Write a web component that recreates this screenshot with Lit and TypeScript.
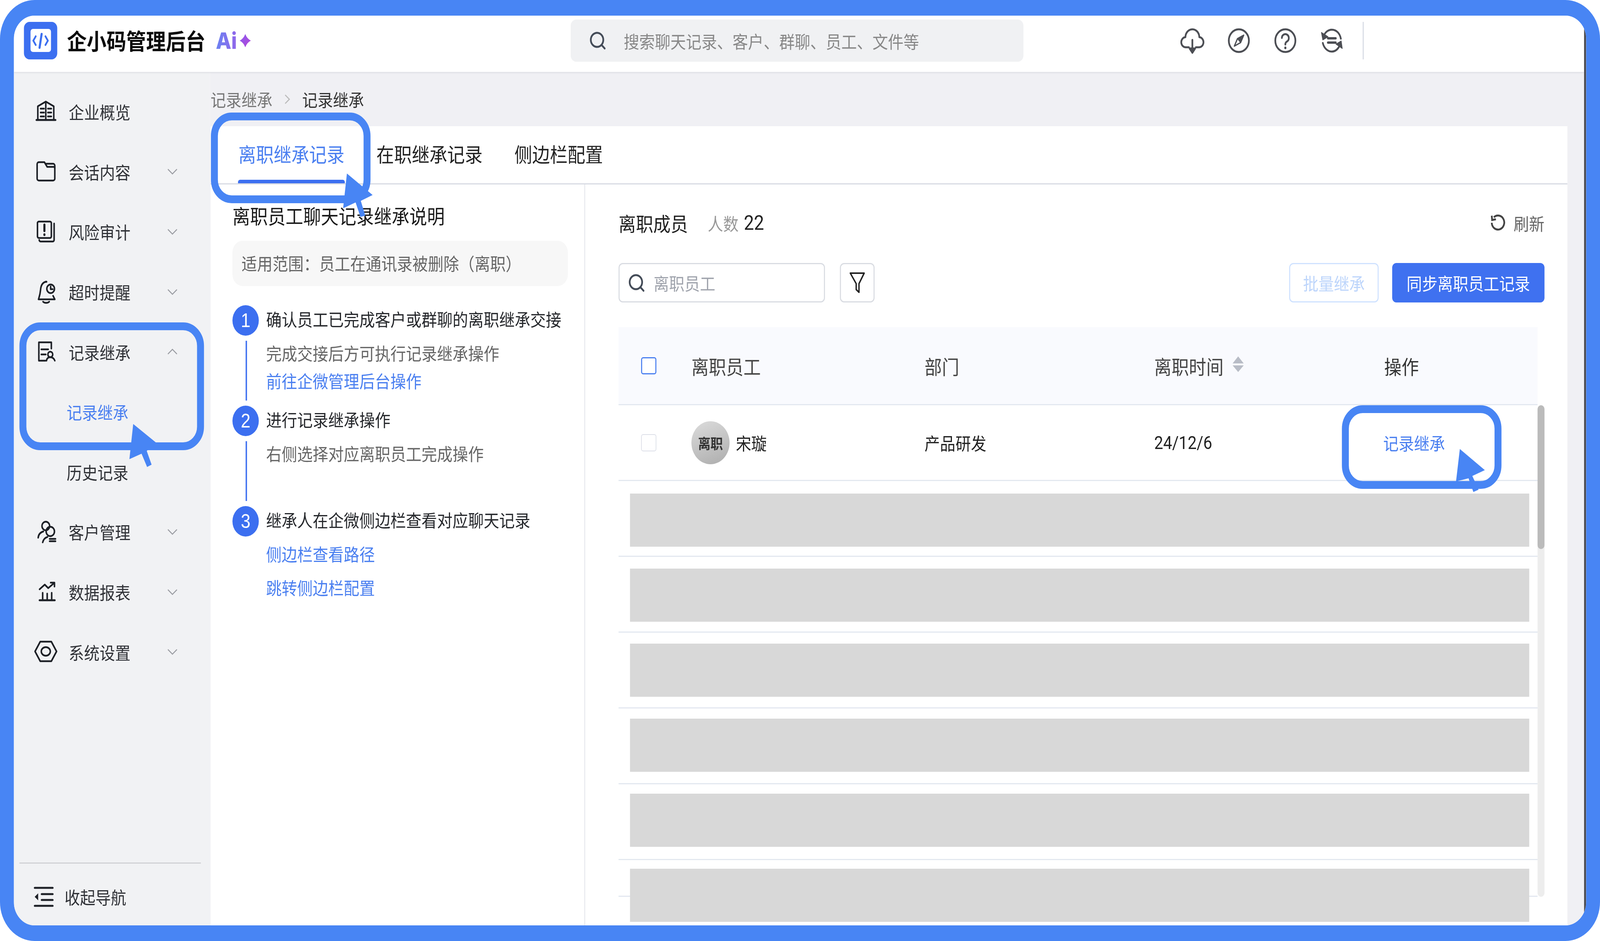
import { LitElement, html, css, svg } from "lit";
import { customElement } from "lit/decorators.js";

const chevDown = html`<svg class="chev" viewBox="0 0 28 16"><path d="M1 2 L14 14 L27 2" /></svg>`;
const chevUp = html`<svg class="chev" viewBox="0 0 28 16"><path d="M1 14 L14 2 L27 14" /></svg>`;

const ICONS: Record<string, unknown> = {
  building: svg`<path d="M1 49h55" stroke-width="5"/><path d="M5 49V14L28 2l23 12v35M28 2v47"/><path d="M13 20h10M13 30h10M13 40h10M34 20h10M34 30h10M34 40h10"/>`,
  folder: svg`<path d="M3 9a5 5 0 0 1 5-5h16l8 12h19a3 3 0 0 1 3 3v27a5 5 0 0 1-5 5H8a5 5 0 0 1-5-5z"/><path d="M27 8h22a5 5 0 0 1 5 5v6"/>`,
  risk: svg`<rect x="4" y="2" width="40" height="42" rx="4"/><path d="M52 7v42a4 4 0 0 1-4 4H13a4 4 0 0 1-4-4"/><path d="M24 10v16" stroke-width="6"/><path d="M24 35v1" stroke-width="6"/>`,
  bell: svg`<path d="M28 2C18 4 14 12 13 22c-1 10-3 17-6 25h47l-5-9"/><path d="M20 53c4 4 14 4 18 0"/><circle cx="42" cy="20" r="11"/><path d="M42 14v7h6"/><path d="M28 2h2" stroke-width="5"/>`,
  record: svg`<path d="M44 20V4H8v47h19"/><path d="M15 22h20M15 35h13"/><circle cx="41" cy="35" r="7"/><path d="M30 51c1-7 6-9 11-9s10 2 13 9"/>`,
  customer: svg`<circle cx="28" cy="13" r="11"/><circle cx="41" cy="27" r="12"/><path d="M6 43c1-9 7-14 15-16"/><path d="M19 55c2-7 6-12 14-14"/><path d="M39 46h17M39 52h17"/>`,
  report: svg`<path d="M10 49h44" stroke-width="5"/><path d="M19 49V30M32 49V32M45 49V30"/><path d="M10 21 25 9l10 9L52 5"/><path d="M42 4h11v10"/>`,
  setting: svg`<path d="M-3 27 12 2h32l15 25-15 25H12z"/><ellipse cx="28" cy="27" rx="13" ry="11"/>`,
};

const NAV: [string, string, string][] = [
  ["building", "企业概览", ""],
  ["folder", "会话内容", "down"],
  ["risk", "风险审计", "down"],
  ["bell", "超时提醒", "down"],
  ["record", "记录继承", "up"],
];
const NAV2: [string, string, string][] = [
  ["customer", "客户管理", "down"],
  ["report", "数据报表", "down"],
  ["setting", "系统设置", "down"],
];

const FONT = css`"Noto Sans CJK SC", "Noto Sans", sans-serif`;

// The layout is authored at the reference's 4612px width. The sandbox browser
// actually reports innerWidth = 4096 (not the stated 4612), which would crop
// the right side, so the stage is squeezed horizontally to the real window
// width in render(). This narrows glyphs by ~11% at 4096; at a true 4612 window
// the factor is 1 and nothing is distorted.
const DESIGN_WIDTH = 4612;

@customElement("app-root")
export class AppRoot extends LitElement {
  static styles = css`
    :host { display: block; width: 100%; height: 2408px; overflow: hidden; background: #fff; font-family: ${FONT}; font-size: 44.5px; color: #222; }
    * { box-sizing: border-box; }
    svg { display: block; flex: none; overflow: visible; }
    .stage { width: 4612px; height: 2408px; position: relative; transform-origin: 0 0; }
    .frame { width: 4612px; height: 2408px; border: 40px solid #4885f4; border-radius: 100px; overflow: hidden; background: #fff; }
    .inner { width: 100%; height: 100%; display: flex; flex-direction: column; border-right: 6px solid #4a4a50; }

    .header { height: 144px; flex: none; position: relative; z-index: 2; background: #fff; display: flex; align-items: center; padding: 0 0 16px 29px; box-shadow: 0 2px 5px rgba(20, 30, 60, .10); }
    .brand { width: 1576px; flex: none; display: flex; align-items: center; }
    .logo { width: 96px; height: 96px; }
    .brand-title { margin: 0 0 3px 28px; font-size: 57px; font-weight: 700; color: #0c0c0c; line-height: 1; }
    .ai { margin-left: 30px; font-family: Inter, sans-serif; font-weight: 800; font-size: 58px; line-height: 1; background: linear-gradient(90deg, #6b82f2, #9266ea); -webkit-background-clip: text; background-clip: text; color: transparent; }
    .star { margin-left: 8px; width: 32px; height: 34px; }
    .gsearch { width: 1305px; height: 108px; flex: none; background: #f0f1f3; border-radius: 16px; display: flex; align-items: center; padding-left: 55px; font-size: 44.8px; color: #888; }
    .gsearch svg { width: 46px; height: 46px; margin-right: 52px; }
    .hicons { margin-left: 455px; display: flex; align-items: center; gap: 70px; }
    .hicons svg { width: 64px; height: 64px; fill: none; stroke: #4c4e54; stroke-width: 5; stroke-linecap: round; stroke-linejoin: round; }
    .hdiv { margin-left: 57px; width: 3px; height: 96px; background: #d5dae3; }

    .body { flex: 1; min-height: 0; display: flex; }
    .side { width: 565px; flex: none; background: #f1f2f4; display: flex; flex-direction: column; padding-top: 25px; }
    .nav { height: 153.6px; flex: none; display: flex; align-items: center; padding: 0 94px 0 64px; color: #2f3136; }
    .nav .ic { width: 56px; height: 56px; margin-right: 38px; fill: none; stroke: #1d2026; stroke-width: 4.4; stroke-linejoin: round; stroke-linecap: round; }
    .chev { width: 28px; height: 16px; margin-left: auto; fill: none; stroke: #9a9ca2; stroke-width: 2.6; }
    .sub { padding-left: 152px; }
    .sub.on { color: #4a7ff0; }
    .foot { margin: auto 26px 0 16px; height: 161px; flex: none; border-top: 3px solid #d1d2d5; display: flex; align-items: center; padding: 10px 0 0 42px; color: #2f3136; }
    .foot svg { width: 56px; height: 56px; margin-right: 32px; fill: none; stroke: #1d2026; stroke-width: 5; stroke-linecap: round; }

    .main { flex: 1; min-width: 0; background: #f0f0f4; display: flex; flex-direction: column; padding: 0 48px 0 2px; }
    .crumbs { height: 139px; flex: none; display: flex; align-items: center; color: #777; }
    .crumbs svg { width: 20px; height: 28px; margin: 0 33px; fill: none; stroke: #bbb; stroke-width: 3; }
    .crumbs .cur { color: #333; }
    .card { flex: 1; min-height: 0; background: #fff; display: flex; flex-direction: column; }
    .tabs { height: 149px; flex: none; display: flex; gap: 92px; padding-left: 80px; border-bottom: 3px solid #d8dbe3; font-size: 51px; color: #222; }
    .tab { position: relative; display: flex; align-items: center; padding-bottom: 7px; }
    .tab.on { color: #4a7ff0; }
    .tab.on::after { content: ""; position: absolute; left: -1px; right: -1px; bottom: 0; height: 9px; background: #3c6ff0; border-radius: 6px 6px 0 0; }
    .split { flex: 1; min-height: 0; display: flex; }

    .guide { width: 1080px; flex: none; border-right: 3px solid #e8eaee; padding: 46px 0 0 63px; }
    .guide-title { font-size: 51px; line-height: 70px; margin-top: -2px; height: 70px; white-space: nowrap; color: #1a1a1a; }
    .scope { width: 967px; height: 116px; margin-top: 30px; background: #f7f7f7; border-radius: 30px; padding-left: 26px; display: flex; align-items: center; color: #666; font-size: 44.8px; padding-bottom: 4px; }
    .steps { margin-top: 49px; }
    .step { height: 257px; display: grid; grid-template-columns: 76px 1fr; column-gap: 21px; font-size: 44.8px; }
    .rail { display: flex; flex-direction: column; align-items: center; }
    .num { width: 76px; height: 78px; flex: none; border-radius: 50%; background: #3c6ff0; color: #fff; display: flex; align-items: center; justify-content: center; font: 50px "Liberation Sans", sans-serif; }
    .rail i { display: block; width: 4px; height: 153px; margin: 13px 0 0 4px; background: #3c6ff0; }
    .st { height: 69px; line-height: 69px; color: #26282c; white-space: nowrap; }
    .sd { height: 70px; line-height: 70px; margin-top: 18px; color: #666; white-space: nowrap; }
    .lk { height: 70px; line-height: 70px; color: #4a7ff0; white-space: nowrap; }
    .lk.a { margin-top: 1px; }
    .lk.b { margin-top: 18px; }
    .lk.c { margin-top: 16px; }

    .panel { flex: 1; min-width: 0; padding: 49px 66px 0 96px; }
    .ptitle { height: 98px; display: flex; align-items: center; }
    .ptitle b { font-weight: 400; font-size: 50px; color: #1f1f1f; }
    .ptitle .cnt { margin-left: 57px; color: #999; }
    .ptitle .val { margin-left: 15px; font: 52px Roboto, sans-serif; color: #222; }
    .refresh { margin-left: auto; display: flex; align-items: center; color: #666; }
    .refresh svg { width: 42px; height: 42px; margin-right: 24px; fill: none; stroke: #444; stroke-width: 5; }
    .tools { height: 101px; margin-top: 54px; display: flex; }
    .input { width: 595px; border: 3px solid #d9dce2; border-radius: 12px; display: flex; align-items: center; padding-left: 26px; color: #a0a4ad; }
    .input svg { width: 46px; height: 46px; margin-right: 26px; }
    .filter { width: 100px; margin-left: 43px; border: 3px solid #d9dce2; border-radius: 12px; display: flex; align-items: center; justify-content: center; }
    .filter svg { width: 44px; height: 56px; fill: none; stroke: #222; stroke-width: 4; stroke-linejoin: round; }
    .btn { display: flex; align-items: center; justify-content: center; border-radius: 12px; }
    .btn.off { width: 258px; margin-left: auto; border: 3px solid #cfe2ff; color: #bdd5fb; }
    .btn.pri { width: 439px; margin-left: 39px; background: #3f71f0; color: #fff; }

    .tbl { margin-top: 63px; display: grid; grid-template-columns: 2649px 20px; }
    .thead, .row { display: grid; grid-template-columns: 145px 672px 662px 663px 1fr; padding-left: 65px; align-items: center; }
    .thead { height: 200px; background: #f9fafe; border-bottom: 3px solid #e3e8f0; font-size: 50px; color: #444; grid-column: 1; }
    .thead .dark { color: #333; }
    .sortcol { display: flex; align-items: center; gap: 26px; }
    .sortcol svg { width: 32px; height: 40px; fill: #b8bcc6; margin-top: -8px; }
    .cb { width: 44px; height: 44px; border-radius: 6px; border: 2px solid #dcdfe8; background: #fff; }
    .cb.b { border: 3px solid #4a7ff0; }
    .tbody { grid-column: 1; position: relative; }
    .row { height: 194px; border-bottom: 3px solid #e3e8f0; color: #222; }
    .row.last { height: 94px; }
    .who { display: flex; align-items: center; gap: 18px; }
    .avatar { width: 110px; height: 110px; border-radius: 50%; background: linear-gradient(160deg, #dcdcdc, #adadad); display: flex; align-items: center; justify-content: center; font-size: 36px; font-weight: 700; color: #333; white-space: nowrap; }
    .date { font: 46px Roboto, sans-serif; color: #222; }
    .op { color: #4a7ff0; margin-left: -3px; }
    .masks { position: absolute; left: 33px; top: 226px; width: 2592px; display: flex; flex-direction: column; gap: 56px; }
    .masks div { height: 136px; background: #d8d8d8; }
    .track { grid-column: 2; background: #ededed; border-radius: 10px; position: relative; }
    .thumb { height: 368px; background: #bbb; border-radius: 10px; }

    .notes { position: absolute; left: 0; top: 0; width: 4612px; height: 2408px; z-index: 5; pointer-events: none; }
    .notes rect { fill: none; stroke: #4885f4; stroke-width: 20; }
    .notes polygon { fill: #4885f4; stroke: none; }
  `;

  private searchIcon(color: string) {
    return html`<svg viewBox="0 0 46 46" fill="none" stroke=${color} stroke-width="5" stroke-linecap="round"><circle cx="21" cy="21" r="18"/><path d="M34 34l9 9"/></svg>`;
  }

  private navRow(r: [string, string, string]) {
    return html`<div class="nav">
      <svg class="ic" viewBox="0 0 56 56">${ICONS[r[0]]}</svg>
      <span>${r[1]}</span>
      ${r[2] === "down" ? chevDown : r[2] === "up" ? chevUp : ""}
    </div>`;
  }

  private header() {
    return html`<div class="header">
      <div class="brand">
        <svg class="logo" viewBox="0 0 96 96">
          <rect width="96" height="96" rx="16" fill="#3c6ff0"/>
          <rect x="19" y="18" width="59" height="59" rx="7" fill="#fff"/>
          <path d="M34 37 27 48l7 11M62 37l7 11-7 11" fill="none" stroke="#3c6ff0" stroke-width="5" stroke-linecap="round" stroke-linejoin="round"/>
          <path d="M51 31 45 66" fill="none" stroke="#3c6ff0" stroke-width="6" stroke-linecap="round"/>
        </svg>
        <span class="brand-title">企小码管理后台</span>
        <span class="ai">Ai</span>
        <svg class="star" viewBox="0 0 32 34">
          <defs><linearGradient id="sg" x1="0" y1="0" x2="1" y2="1"><stop offset="0" stop-color="#8a5cf0"/><stop offset="1" stop-color="#b545d6"/></linearGradient></defs>
          <path d="M16 0Q21 12 32 17Q21 22 16 34Q11 22 0 17Q11 12 16 0z" fill="url(#sg)"/>
        </svg>
      </div>
      <div class="gsearch">${this.searchIcon("#444c58")}<span>搜索聊天记录、客户、群聊、员工、文件等</span></div>
      <div class="hicons">
        <svg viewBox="0 0 64 64"><path d="M22 49H14A13 13 0 0 1 12 23 A20 20 0 0 1 52 23 A13 13 0 0 1 50 49H42"/><path d="M32 30V56"/><path d="M24 52l8 11 8-11z" fill="#4c4e54"/></svg>
        <svg viewBox="0 0 64 64"><circle cx="32" cy="32" r="29"/><path d="M46 18 28 27l-9 19 18-9z" stroke-width="3.5"/><path d="M46 18 28 27l9 10z" fill="#4c4e54" stroke-width="2"/></svg>
        <svg viewBox="0 0 64 64"><circle cx="32" cy="32" r="29"/><path d="M22 25a10 10 0 1 1 15 9c-3 2-5 3-5 8"/><path d="M32 50v1" stroke-width="6"/></svg>
        <svg viewBox="0 0 64 64"><path d="M7 24C11 11 21 4 32 4c13 0 23 9 26 23"/><path d="M57 38C53 52 43 60 32 60 19 60 9 50 6 38"/><path d="M2 11l4 19 15-8z" fill="#4c4e54" stroke-width="2"/><path d="M62 52l-3-19-15 8z" fill="#4c4e54" stroke-width="2"/><path d="M21 26h22M21 37h22" stroke-width="6"/></svg>
      </div>
      <div class="hdiv"></div>
    </div>`;
  }

  private sidebar() {
    return html`<div class="side">
      ${NAV.map((r) => this.navRow(r))}
      <div class="nav sub on">记录继承</div>
      <div class="nav sub">历史记录</div>
      ${NAV2.map((r) => this.navRow(r))}
      <div class="foot">
        <svg viewBox="0 0 56 56"><path d="M2 6h52M22 22h32M22 37h32M2 52h52"/><path d="M2 29l10-9v18z" fill="#1d2026" stroke="none"/></svg>
        <span>收起导航</span>
      </div>
    </div>`;
  }

  private guide() {
    return html`<div class="guide">
      <div class="guide-title">离职员工聊天记录继承说明</div>
      <div class="scope">适用范围：员工在通讯录被删除（离职）</div>
      <div class="steps">
        <div class="step">
          <div class="rail"><div class="num">1</div><i></i></div>
          <div>
            <div class="st">确认员工已完成客户或群聊的离职继承交接</div>
            <div class="sd">完成交接后方可执行记录继承操作</div>
            <div class="lk a">前往企微管理后台操作</div>
          </div>
        </div>
        <div class="step">
          <div class="rail"><div class="num">2</div><i></i></div>
          <div>
            <div class="st">进行记录继承操作</div>
            <div class="sd">右侧选择对应离职员工完成操作</div>
          </div>
        </div>
        <div class="step">
          <div class="rail"><div class="num">3</div></div>
          <div>
            <div class="st">继承人在企微侧边栏查看对应聊天记录</div>
            <div class="lk b">侧边栏查看路径</div>
            <div class="lk c">跳转侧边栏配置</div>
          </div>
        </div>
      </div>
    </div>`;
  }

  private panel() {
    const blanks = [0, 1, 2, 3, 4];
    return html`<div class="panel">
      <div class="ptitle">
        <b>离职成员</b><span class="cnt">人数</span><span class="val">22</span>
        <div class="refresh">
          <svg viewBox="0 0 42 42"><path d="M9 7A18 18 0 1 1 3 21"/><path d="M3 3l1 11 11-2" stroke-linejoin="miter"/></svg>
          <span>刷新</span>
        </div>
      </div>
      <div class="tools">
        <div class="input">${this.searchIcon("#444c58")}<span>离职员工</span></div>
        <div class="filter"><svg viewBox="0 0 44 56"><path d="M2 3h40L27 30v22l-8-7V30z"/></svg></div>
        <div class="btn off">批量继承</div>
        <div class="btn pri">同步离职员工记录</div>
      </div>
      <div class="tbl">
        <div class="thead">
          <div class="cb b"></div>
          <div>离职员工</div>
          <div>部门</div>
          <div class="sortcol"><span>离职时间</span><svg viewBox="0 0 32 40"><path d="M16 0l16 18H0zM0 23h32L16 40z"/></svg></div>
          <div class="dark">操作</div>
        </div>
        <div></div>
        <div class="tbody">
          <div class="row">
            <div class="cb"></div>
            <div class="who"><div class="avatar">离职</div><span>宋璇</span></div>
            <div>产品研发</div>
            <div class="date">24/12/6</div>
            <div class="op">记录继承</div>
          </div>
          ${blanks.map(() => html`<div class="row"></div>`)}
          <div class="row last"></div>
          <div class="masks">${[0, 1, 2, 3, 4, 5].map(() => html`<div></div>`)}</div>
        </div>
        <div class="track"><div class="thumb"></div></div>
      </div>
    </div>`;
  }

  render() {
    const fit = Math.min(1, window.innerWidth / DESIGN_WIDTH);
    return html`<div class="stage" style="transform: scaleX(${fit})">
      <div class="frame"><div class="inner">
        ${this.header()}
        <div class="body">
          ${this.sidebar()}
          <div class="main">
            <div class="crumbs">
              <span>记录继承</span>
              <svg viewBox="0 0 20 28"><path d="M4 3l12 11L4 25"/></svg>
              <span class="cur">记录继承</span>
            </div>
            <div class="card">
              <div class="tabs">
                <div class="tab on">离职继承记录</div>
                <div class="tab">在职继承记录</div>
                <div class="tab">侧边栏配置</div>
              </div>
              <div class="split">${this.guide()}${this.panel()}</div>
            </div>
          </div>
        </div>
      </div></div>
      <svg class="notes" viewBox="0 0 4612 2408">
        <rect x="66" y="835" width="512" height="307" rx="50"/>
        <polygon points="384,1085 449,1132 423,1154 437,1189 424,1195 408,1161 373,1175"/>
        <rect x="618" y="298" width="440" height="212" rx="50"/>
        <polygon points="1000,444 1074,499 1040,514 1053,552 1039,555 1025,518 989,533"/>
        <rect x="3878" y="1047" width="440" height="194" rx="50"/>
        <polygon points="4208,1149 4280,1203 4244,1218 4262,1253 4247,1259 4233,1224 4197,1232"/>
      </svg>
    </div>`;
  }
}
